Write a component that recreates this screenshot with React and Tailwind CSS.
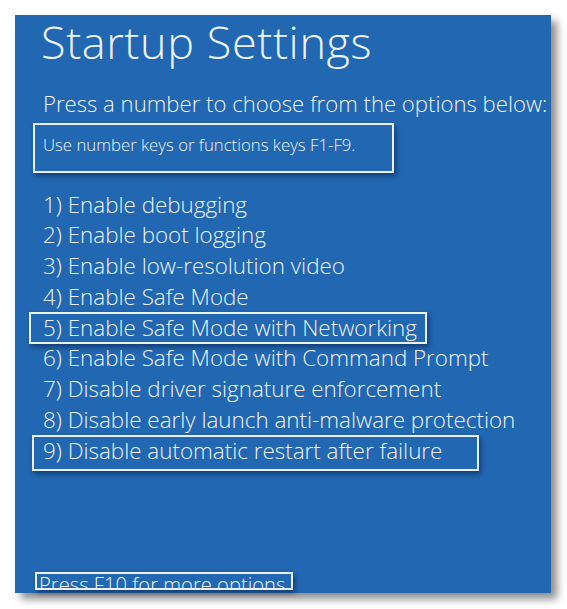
import React from 'react';

const options = [
  { n: 1, label: 'Enable debugging' },
  { n: 2, label: 'Enable boot logging' },
  { n: 3, label: 'Enable low-resolution video' },
  { n: 4, label: 'Enable Safe Mode' },
  { n: 5, label: 'Enable Safe Mode with Networking', box: 'left-[14px] top-[-0.7px] w-[398px] h-[32px]' },
  { n: 6, label: 'Enable Safe Mode with Command Prompt' },
  { n: 7, label: 'Disable driver signature enforcement' },
  { n: 8, label: 'Disable early launch anti-malware protection' },
  { n: 9, label: 'Disable automatic restart after failure', box: 'left-[17px] top-[-0.7px] w-[447px] h-[36px]' },
];

const boxCls = 'border-2 border-white/90 shadow-[2px_3px_5px_rgba(0,10,40,0.45)]';

export default function App() {
  return (
    <div className="w-[567px] h-[609px] bg-white overflow-hidden font-['Open_Sans',sans-serif]">
      <div className="ml-[15px] mt-[15px] w-[536px] h-[578px] bg-[#2167b1] text-[#eef3fa] flex flex-col pt-[2px] shadow-[6px_6px_8px_rgba(0,0,0,0.45)]">
        <h1 className="pl-[26px] text-[45px] leading-[49px] font-light tracking-[0.6px] whitespace-nowrap">Startup Settings</h1>

        <p className="mt-[21.5px] pl-[28px] text-[22.15px] leading-[30px] font-[350] whitespace-nowrap">
          Press a number to choose from the options below:
        </p>

        <div className={`mt-[5.5px] ml-[18px] w-[361px] h-[50px] pt-[9.6px] pl-[8px] ${boxCls}`}>
          <p className="text-[16.75px] leading-[20px] font-[350] whitespace-nowrap">Use number keys or functions keys F1-F9.</p>
        </div>

        <ul className="mt-[16.7px]">
          {options.map((o) => (
            <li key={o.n} className="relative h-[30.75px] pl-[28px] text-[22.4px] leading-[30.75px] font-[350] whitespace-nowrap">
              {o.n}) {o.label}
              {o.box && <span className={`absolute ${o.box} ${boxCls}`} />}
            </li>
          ))}
        </ul>

        <div className={`mt-auto mb-[3px] ml-[20px] w-[258px] h-[18px] pl-[2px] overflow-hidden ${boxCls}`}>
          <p className="text-[20.2px] leading-[20px] font-[350] whitespace-nowrap">Press F10 for more options</p>
        </div>
      </div>
    </div>
  );
}
